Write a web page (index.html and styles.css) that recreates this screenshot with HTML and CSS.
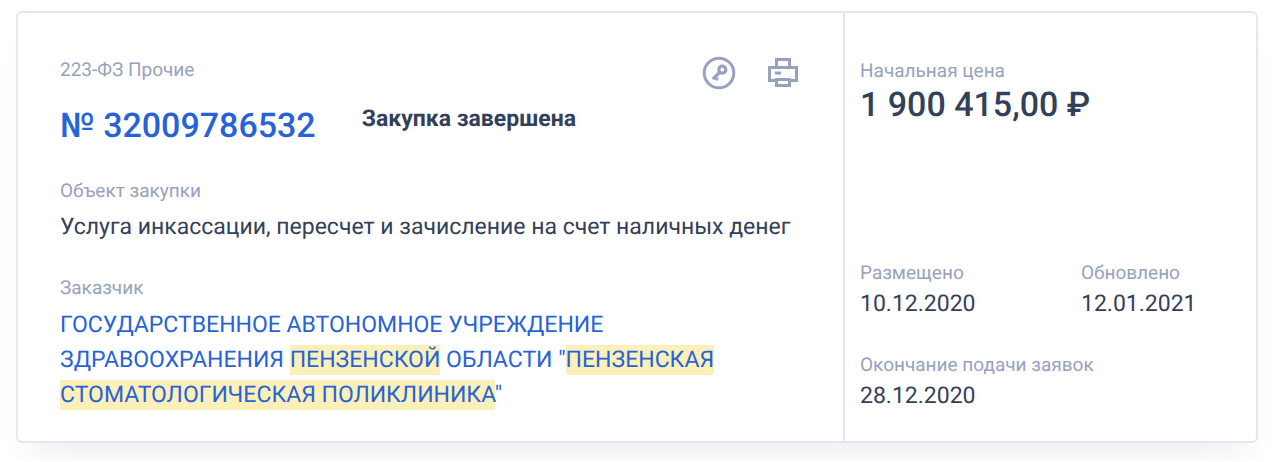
FILE: index.html
```html
<!DOCTYPE html>
<html lang="ru">
<head>
<meta charset="utf-8">
<title>Закупка № 32009786532</title>
<link rel="stylesheet" href="styles.css">
</head>
<body>
<article class="card">
  <section class="main">
    <header class="top">
      <div class="heading">
        <p class="law">223-ФЗ Прочие</p>
        <div class="title-row">
          <a class="number" href="#">№ 32009786532</a>
          <span class="status">Закупка завершена</span>
        </div>
      </div>
      <div class="actions">
        <button class="icon-button" type="button" aria-label="Электронная подпись">
          <svg width="34" height="34" viewBox="0 0 34 34" fill="none" stroke="currentColor">
            <circle cx="17" cy="17" r="14.800" stroke-width="3"/>
            <circle cx="20.300" cy="13.700" r="3.500" stroke-width="3.200"/>
            <path d="M18 16L10.800 23.200M12.800 20.800l3 3" stroke-width="3.200"/>
          </svg>
        </button>
        <button class="icon-button" type="button" aria-label="Печать">
          <svg width="34" height="34" viewBox="0 0 34 34" fill="none" stroke="currentColor" stroke-width="3">
            <path d="M9.500 11V3.500h13V11M9 24.500H2.500V11.500h27V24.500H23M9.500 23.500h13v6h-13z"/>
            <path d="M8 17h6"/>
          </svg>
        </button>
      </div>
    </header>
    <div class="field">
      <p class="label">Объект закупки</p>
      <p class="value subject">Услуга инкассации, пересчет и зачисление на счет наличных денег</p>
    </div>
    <div class="field">
      <p class="label">Заказчик</p>
      <a class="value customer" href="#">ГОСУДАРСТВЕННОЕ АВТОНОМНОЕ УЧРЕЖДЕНИЕ ЗДРАВООХРАНЕНИЯ <mark>ПЕНЗЕНСКОЙ</mark> ОБЛАСТИ "<mark>ПЕНЗЕНСКАЯ СТОМАТОЛОГИЧЕСКАЯ ПОЛИКЛИНИКА</mark>"</a>
    </div>
  </section>
  <aside class="side">
    <div>
      <p class="label">Начальная цена</p>
      <p class="price">1 900 415,00 ₽</p>
    </div>
    <div class="dates">
      <div><p class="label">Размещено</p><p class="date">10.12.2020</p></div>
      <div><p class="label">Обновлено</p><p class="date">12.01.2021</p></div>
      <div class="wide"><p class="label">Окончание подачи заявок</p><p class="date">28.12.2020</p></div>
    </div>
  </aside>
</article>
</body>
</html>
```
FILE: styles.css
```css
* { box-sizing: border-box; }
body { margin: 0; padding: 11px 26px 18px 16px; background: #fff; color: #334059; font-family: Roboto, "Liberation Sans", sans-serif; text-rendering: geometricPrecision; }
p { margin: 0; }
.card { display: grid; grid-template-columns: minmax(0, 1fr) 411px; border: 2px solid #e3e7f2; border-radius: 6px; box-shadow: 0 24px 32px -16px rgba(51, 64, 89, .1); background: #fff; }
.main { padding: 43px 42px 29px; border-right: 2px solid #e3e7f2; }
.top { display: flex; justify-content: space-between; margin-bottom: 29px; }
.law, .label { color: #96a2be; font-size: 19px; line-height: 28px; }
.title-row { display: flex; gap: 46px; margin-top: 20px; }
.number { color: #2763d6; font-size: 34px; line-height: 44px; font-weight: 500; text-decoration: none; }
.status { font-size: 23px; line-height: 30px; font-weight: 700; }
.actions { display: flex; gap: 31px; }
.icon-button { display: block; width: 34px; height: 34px; padding: 0; border: 0; background: none; color: #96a2be; cursor: pointer; }
.icon-button svg { display: block; }
.field + .field { margin-top: 29px; }
.value { display: block; margin-top: 4px; font-size: 23px; line-height: 36px; }
.subject { margin-right: -16px; }
.customer { margin-top: 5px; line-height: 35px; color: #2763d6; text-decoration: none; }
mark { padding: 1px 0 2px; background: #fbf0b9; color: inherit; }
.side { display: flex; flex-direction: column; justify-content: space-between; padding: 44px 15px 28px; }
.price { font-size: 34px; line-height: 40px; font-weight: 500; }
.dates { display: grid; grid-template-columns: 221px 1fr; row-gap: 30px; }
.wide { grid-column: 1 / -1; }
.date { font-size: 23px; line-height: 34px; }
```
